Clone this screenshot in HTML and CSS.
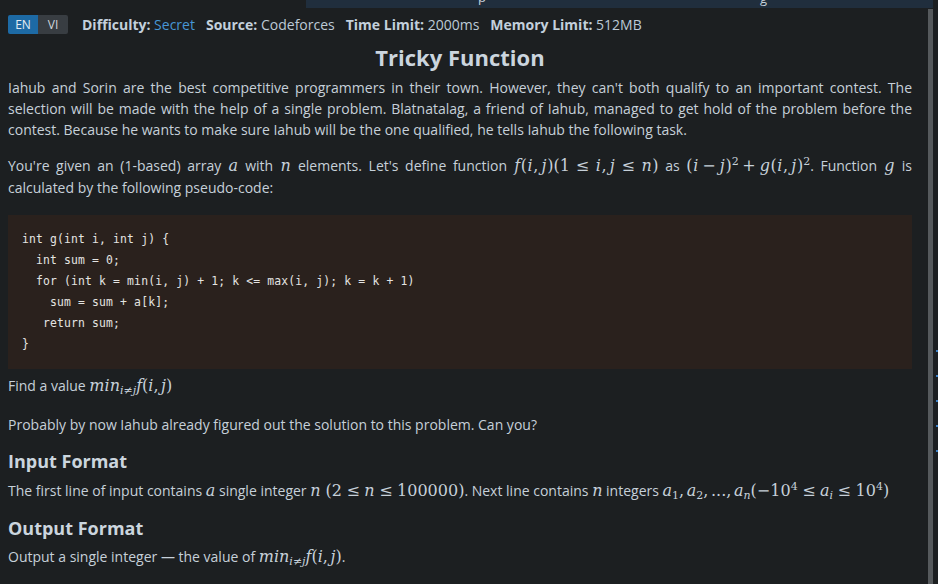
FILE: index.html
```html
<!DOCTYPE html>
<html lang="en">
<head>
<meta charset="utf-8">
<title>Tricky Function</title>
<link rel="stylesheet" href="styles.css">
</head>
<body>
<div class="app">
  <div class="topbar"><span class="topbar-text">p</span><span class="topbar-text2">g</span></div>
  <div class="main">
    <div class="meta">
      <div class="lang"><span class="lang-btn active">EN</span><span class="lang-btn">VI</span></div>
      <span class="meta-item"><b>Difficulty:</b> <span class="secret">Secret</span></span>
      <span class="meta-item"><b>Source:</b> Codeforces</span>
      <span class="meta-item"><b>Time Limit:</b> 2000ms</span>
      <span class="meta-item"><b>Memory Limit:</b> 512MB</span>
    </div>
    <h1 class="title">Tricky Function</h1>
    <p class="para">Iahub and Sorin are the best competitive programmers in their town. However, they can't both qualify to an important contest. The selection will be made with the help of a single problem. Blatnatalag, a friend of Iahub, managed to get hold of the problem before the contest. Because he wants to make sure Iahub will be the one qualified, he tells Iahub the following task.</p>
    <p class="para para2">You're given an (1-based) array <span class="m"><i>a</i></span> with <span class="m"><i>n</i></span> elements. Let's define function <span class="m"><i>f</i>(<i>i</i>,<span class="th"></span><i>j</i>)(1<span class="rel">≤</span><i>i</i>,<span class="th"></span><i>j</i><span class="rel">≤</span><i>n</i>)</span> as <span class="m">(<i>i</i><span class="bin">−</span><i>j</i>)<sup>2</sup><span class="bin">+</span><i>g</i>(<i>i</i>,<span class="th"></span><i>j</i>)<sup>2</sup></span>. Function <span class="m"><i>g</i></span> is calculated by the following pseudo-code:</p>
    <pre class="code">int g(int i, int j) {
  int sum = 0;
  for (int k = min(i, j) + 1; k &lt;= max(i, j); k = k + 1)
    sum = sum + a[k];
   return sum;
}</pre>
    <p class="para find">Find a value <span class="m"><i>min</i><sub><i>i</i>≠<i>j</i></sub><i>f</i>(<i>i</i>,<span class="th"></span><i>j</i>)</span></p>
    <p class="para prob">Probably by now Iahub already figured out the solution to this problem. Can you?</p>
    <h2 class="section">Input Format</h2>
    <p class="para">The first line of input contains <span class="m"><i>a</i></span> single integer <span class="m"><i>n</i><span class="sp"></span>(2<span class="rel">≤</span><i>n</i><span class="rel">≤</span>100000)</span>. Next line contains <span class="m"><i>n</i></span> integers <span class="m"><i>a</i><sub>1</sub>,<span class="th"></span><i>a</i><sub>2</sub>,<span class="th"></span>...,<span class="th"></span><i>a</i><sub><i>n</i></sub>(−10<sup>4</sup><span class="rel">≤</span><i>a</i><sub><i>i</i></sub><span class="rel">≤</span>10<sup>4</sup>)</span></p>
    <h2 class="section out">Output Format</h2>
    <p class="para">Output a single integer — the value of <span class="m"><i>min</i><sub><i>i</i>≠<i>j</i></sub><i>f</i>(<i>i</i>,<span class="th"></span><i>j</i>)</span>.</p>
  </div>
  <div class="scroll"></div>
  <div class="side">
    <span class="dot"></span><span class="dot"></span><span class="dot"></span><span class="dot"></span><span class="dot"></span>
  </div>
</div>
</body>
</html>
```
FILE: styles.css
```css
* { box-sizing: border-box; }
html, body {
  margin: 0;
  padding: 0;
  background: #1c1f21;
  overflow: hidden;
}
body {
  font-family: "Open Sans", "Noto Sans", sans-serif;
  font-size: 14px;
  color: #c6d0d9;
}
.app {
  position: relative;
  display: flex;
  width: 938px;
  height: 584px;
}
.topbar {
  position: absolute;
  left: 306px;
  top: 0;
  width: 627px;
  height: 8px;
  background: #202e3d;
  overflow: hidden;
  font-size: 13px;
  color: #c6d0d9;
}
.topbar-text {
  position: absolute;
  left: 172px;
  top: -12px;
}
.topbar-text2 {
  position: absolute;
  left: 454px;
  top: -11px;
}
.main {
  width: 928px;
  padding: 15px 16px 0 8px;
  overflow: hidden;
}
.scroll {
  width: 5px;
  margin-top: 9px;
  background: #55595c;
}
.side {
  flex: 1;
  margin-left: 1px;
  display: flex;
  flex-direction: column;
  align-items: flex-end;
  padding-top: 350px;
  gap: 23px;
}
.dot {
  width: 2px;
  height: 2px;
  background: #3b7fc4;
}
.meta {
  display: flex;
  align-items: center;
  height: 19px;
  gap: 11px;
  color: #bccad6;
}
.lang {
  display: flex;
  margin-right: 3px;
  border-radius: 2px;
  overflow: hidden;
}
.lang-btn {
  width: 30px;
  height: 19px;
  line-height: 19px;
  text-align: center;
  font-size: 12px;
  background: #383d42;
  color: #d0d6dc;
}
.lang-btn.active {
  background: #1d6aa5;
  color: #e4ecf3;
}
.meta-item b {
  font-weight: 700;
  color: #c3d0dc;
}
.secret { color: #4796d4; }
.title {
  margin: 8px 0 0;
  text-align: center;
  font-size: 22px;
  line-height: 30px;
  font-weight: 700;
  color: #cbd5de;
}
.para {
  margin: 5px 0 0;
  line-height: 21px;
  text-align: justify;
}
.para2 {
  margin-top: 15px;
  line-height: 22px;
}
.m {
  font-family: "DejaVu Serif", "Liberation Serif", serif;
  font-size: 16px;
  color: #c6d0d9;
}
.m i { font-style: italic; }
.m sup { font-size: 11px; vertical-align: 6px; line-height: 0; }
.m sub { font-size: 11px; vertical-align: -3px; line-height: 0; }
.para2 .m i { margin: 0 0.6px; }
.para2 .rel { margin: 0 6px; }
.rel { margin: 0 4.5px; }
.bin { margin: 0 3.5px; }
.th { display: inline-block; width: 2.6px; }
.sp { display: inline-block; width: 5px; }
.code {
  margin: 16px 0 0;
  padding: 14px;
  background: #2a211d;
  color: #e4e4e2;
  font-family: "DejaVu Sans Mono", "Liberation Mono", monospace;
  font-size: 11.4px;
  letter-spacing: 0.15px;
  line-height: 21px;
}
.find { margin-top: 6px; }
.prob { margin-top: 18px; }
.section {
  margin: 13px 0 0;
  font-size: 18px;
  line-height: 26px;
  font-weight: 700;
  color: #cbd5de;
}
.section + .para { margin-top: 6px; }
.section.out { margin-top: 14px; }
.section.out + .para { margin-top: 5px; }
```
